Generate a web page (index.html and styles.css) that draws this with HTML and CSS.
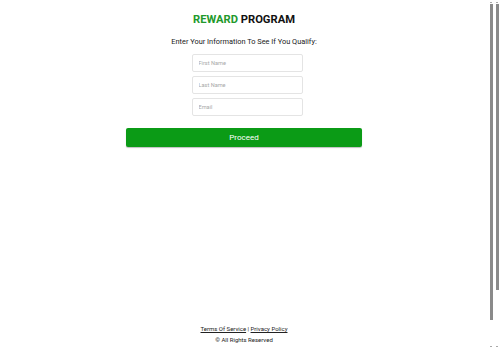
FILE: index.html
```html
<!DOCTYPE html>
<html lang="en">
<head>
<meta charset="utf-8">
<title>Reward Program</title>
<link rel="stylesheet" href="styles.css">
</head>
<body>
<div class="page">
  <main class="main">
    <h1 class="title"><span class="title-green">REWARD</span> PROGRAM</h1>
    <p class="subtitle">Enter Your Information To See If You Qualify:</p>
    <form class="form">
      <div class="fields">
        <input class="field" type="text" placeholder="First Name">
        <input class="field" type="text" placeholder="Last Name">
        <input class="field" type="email" placeholder="Email">
      </div>
      <button class="proceed" type="button">Proceed</button>
    </form>
  </main>
  <footer class="footer">
    <p class="footer-links"><a href="#">Terms Of Service</a> | <a href="#">Privacy Policy</a></p>
    <p class="footer-copy">© All Rights Reserved</p>
  </footer>
</div>
<div class="rail rail-inner" aria-hidden="true">
  <span class="arrow arrow-up"></span>
  <span class="thumb thumb-inner"></span>
  <span class="rail-fill"></span>
  <span class="arrow arrow-down"></span>
</div>
<div class="rail rail-outer" aria-hidden="true">
  <span class="arrow arrow-up"></span>
  <span class="thumb thumb-outer"></span>
  <span class="rail-fill"></span>
  <span class="arrow arrow-down"></span>
</div>
</body>
</html>
```

FILE: styles.css
```css
html {
  background: #fff;
}
body {
  margin: 0;
  height: 100vh;
  overflow: hidden;
  display: flex;
  background: #fff;
  font-family: Roboto, "Liberation Sans", Arial, sans-serif;
  color: #1f1f1f;
}
.page {
  flex: 1;
  min-width: 0;
  display: flex;
  flex-direction: column;
  align-items: center;
}
.main {
  display: flex;
  flex-direction: column;
  align-items: center;
  width: 100%;
}
.title {
  margin: 12px 0 0;
  font-size: 11.2px;
  line-height: 16px;
  font-weight: 700;
  color: #111;
}
.title-green {
  color: #22992c;
}
.subtitle {
  margin: 9px 0 0;
  font-size: 7.4px;
  line-height: 10px;
  color: #1a1a1a;
}
.form {
  margin-top: 7px;
  display: flex;
  flex-direction: column;
  align-items: center;
}
.fields {
  display: flex;
  flex-direction: column;
  gap: 4px;
  margin-left: 6px;
}
.field {
  box-sizing: border-box;
  width: 111px;
  height: 18px;
  margin: 0;
  padding: 0 6px;
  border: 1px solid #e4e4e4;
  border-radius: 2px;
  font-family: Roboto, "Liberation Sans", Arial, sans-serif;
  font-size: 5.6px;
  color: #333;
  background: #fff;
  outline: none;
}
.field::placeholder {
  color: #a8a8a8;
}
.proceed {
  margin-top: 12px;
  width: 236px;
  height: 19px;
  padding: 0;
  border: none;
  border-radius: 2px;
  background: #0b9b16;
  box-shadow: 0 1px 1px rgba(0, 0, 0, 0.25);
  color: #fff;
  font-family: Roboto, "Liberation Sans", Arial, sans-serif;
  font-size: 8px;
  cursor: pointer;
}
.footer {
  margin-top: auto;
  padding-bottom: 3px;
  text-align: center;
  font-size: 6px;
  line-height: 11px;
  color: #222;
}
.footer-links,
.footer-copy {
  margin: 0;
}
.footer-links a {
  color: #222;
  text-decoration: underline;
}

/* scrollbar rails */
.rail {
  width: 6px;
  flex: none;
  display: flex;
  flex-direction: column;
  align-items: flex-start;
  background: #fff;
}
.arrow {
  display: block;
  width: 2px;
  height: 1px;
  margin: 1.5px 0 1.5px 2px;
  background: #a9a9a9;
  flex: none;
}
.thumb {
  display: block;
  flex: none;
  width: 3.5px;
  margin-left: 1.5px;
  background: #8a8a8a;
}
.thumb-inner {
  height: 316px;
}
.thumb-outer {
  height: 286px;
}
.rail-fill {
  flex: 1;
}
```
